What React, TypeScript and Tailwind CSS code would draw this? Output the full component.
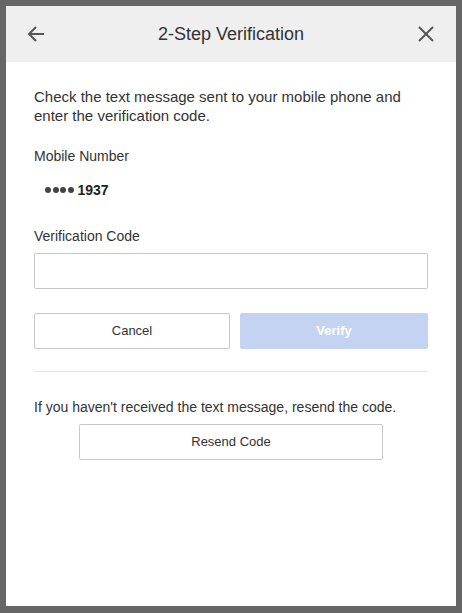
import React from 'react';

const ArrowLeft = () => (
    <svg width="20" height="20" viewBox="0 0 20 20" fill="none" stroke="#555" strokeWidth="2">
        <path d="M18 10H3" />
        <path d="M10 3L3 10L10 17" />
    </svg>
);

const CloseIcon = () => (
    <svg width="18" height="18" viewBox="0 0 18 18" fill="none" stroke="#555" strokeWidth="2">
        <path d="M2 2L16 16" />
        <path d="M16 2L2 16" />
    </svg>
);

const App = () => {
    return (
        <div
            className="w-[462px] h-[613px] bg-[#666666] pt-[6px] px-[6px] pb-[7px]"
            style={{ fontFamily: '"Liberation Sans", Arial, sans-serif' }}
        >
            <div className="w-[450px] h-[600px] bg-white flex flex-col">
                {/* Header */}
                <div className="h-[56px] bg-[#efefef] flex items-center justify-between px-[20px]">
                    <button className="w-[20px] h-[20px] flex items-center justify-center">
                        <ArrowLeft />
                    </button>
                    <h1 className="text-[18px] text-[#333] leading-none">2-Step Verification</h1>
                    <button className="w-[20px] h-[20px] flex items-center justify-center">
                        <CloseIcon />
                    </button>
                </div>

                {/* Body */}
                <div className="px-[28px] pt-[25px] text-[14px] leading-[20px] text-[#333]">
                    <p className="text-[15px] leading-[19px]">
                        Check the text message sent to your mobile phone and enter the verification code.
                    </p>

                    <div className="mt-[21px]">Mobile Number</div>
                    <div className="mt-[14px] pl-[11px] flex items-center">
                        <span className="flex gap-[1.5px] mr-[4px]">
                            <span className="w-[6px] h-[6px] rounded-full bg-[#444]" />
                            <span className="w-[6px] h-[6px] rounded-full bg-[#444]" />
                            <span className="w-[6px] h-[6px] rounded-full bg-[#444]" />
                            <span className="w-[6px] h-[6px] rounded-full bg-[#444]" />
                        </span>
                        <span className="font-bold text-[#222] text-[14px]">1937</span>
                    </div>

                    <div className="mt-[26px]">Verification Code</div>
                    <input
                        type="text"
                        className="mt-[7px] w-full h-[36px] border border-[#c8c8c8] rounded-[2px] px-2 outline-none"
                    />

                    <div className="mt-[24px] flex gap-[10px]">
                        <button className="w-[196px] h-[36px] border border-[#c8c8c8] rounded-[2px] bg-white text-[#333] text-[13px]">
                            Cancel
                        </button>
                        <button className="flex-1 h-[36px] rounded-[2px] bg-[#c5d3f3] text-white font-bold text-[13px]">
                            Verify
                        </button>
                    </div>

                    <div className="mt-[22px] h-px bg-[#e5e5e5]" />

                    <p className="mt-[25px]">If you haven't received the text message, resend the code.</p>
                    <div className="mt-[7px] flex justify-center">
                        <button className="w-[304px] h-[36px] border border-[#c8c8c8] rounded-[2px] bg-white text-[#333] text-[13px]">
                            Resend Code
                        </button>
                    </div>
                </div>
            </div>
        </div>
    );
};

export default App;
